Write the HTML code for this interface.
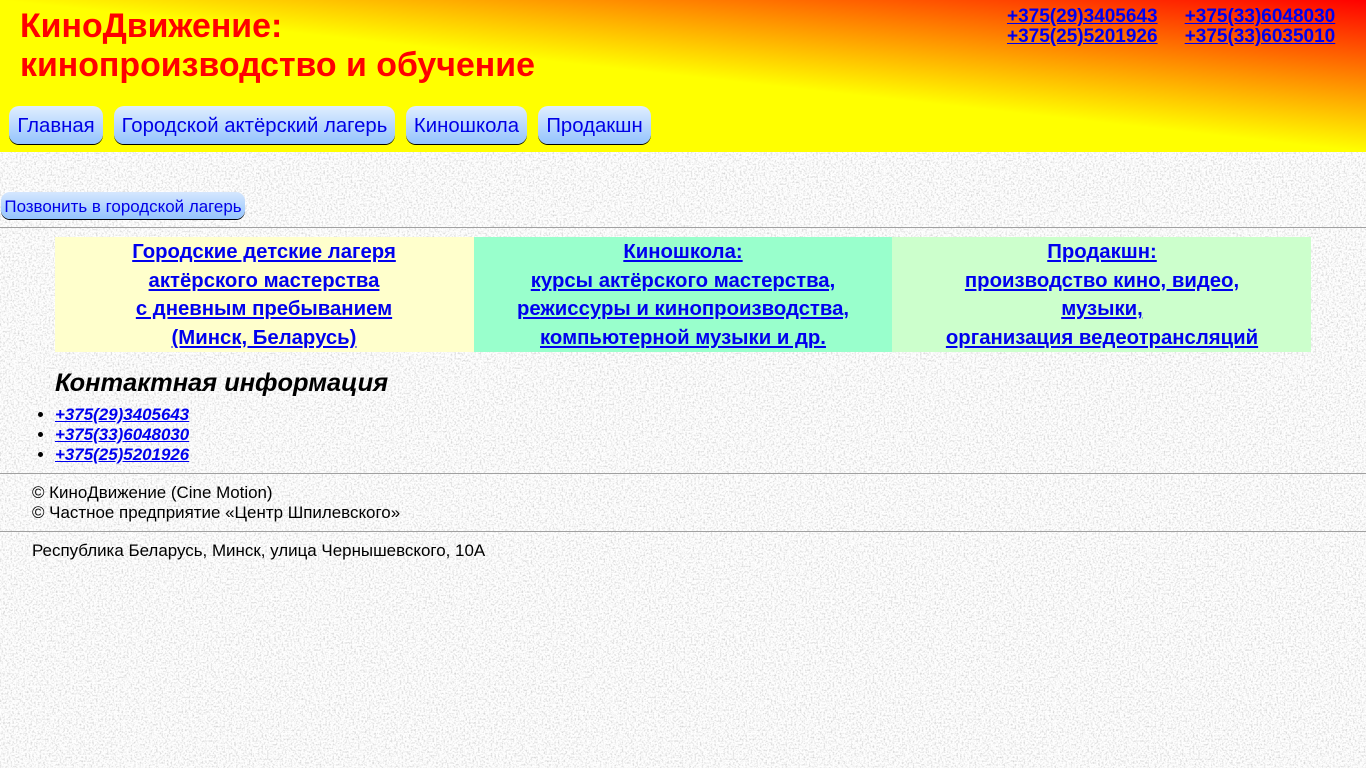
<!DOCTYPE html>
<html lang="ru">
<head>
<meta charset="utf-8">
<title>КиноДвижение</title>
<style>
html,body{margin:0;padding:0}
body{width:1366px;height:768px;overflow:hidden;position:relative;background:#f9f9f9;font-family:"Liberation Sans",sans-serif;color:#000}
#tex{position:absolute;left:0;top:0;width:1366px;height:768px}
a{color:#0000ee;text-decoration:underline}
.abs{position:absolute;white-space:nowrap}
header{position:absolute;left:0;top:0;width:1366px;height:152px;background:linear-gradient(to bottom left,#f00,#ff0 50%)}
h1{margin:0;font-size:33.88px;line-height:39px;color:#f00;font-weight:bold;left:20px;top:7px}
.ph{font-size:19px;font-weight:bold;line-height:20px}
.btn{position:absolute;box-sizing:border-box;height:38px;top:106px;font-size:20.33px;line-height:40px;text-align:center;color:#0000e6;border-radius:10px;background:linear-gradient(#e0eefe,#94c4fd);box-shadow:0 1px 0 #000;white-space:nowrap}
.btn2{position:absolute;box-sizing:border-box;left:1px;top:192px;width:244px;height:27px;font-size:16.94px;line-height:29px;text-align:center;color:#0000e6;border-radius:9px;background:linear-gradient(#d5e7fe,#94c4fd);box-shadow:0 1px 0 #000;white-space:nowrap}
hr{position:absolute;left:0;width:1366px;height:1px;margin:0;border:0;background:#a0a0a0}
.cell{position:absolute;top:237px;height:115px;text-align:center;font-size:20.33px;font-weight:bold;line-height:28.6px;padding-top:1px;box-sizing:border-box}
h2{margin:0;left:55px;top:367px;font-size:25.41px;line-height:32px;font-style:italic;font-weight:bold}
ul{position:absolute;left:0;top:405px;margin:0;padding:0 0 0 55px;font-size:16.94px;line-height:20px;font-style:italic;font-weight:bold}
ul li::marker{font-style:normal}
.t{font-size:16.94px;line-height:20px;left:32px}
</style>
</head>
<body>
<svg id="tex" xmlns="http://www.w3.org/2000/svg" width="1366" height="768">
<filter id="n" x="0" y="0" width="100%" height="100%">
<feTurbulence type="fractalNoise" baseFrequency="0.55" numOctaves="2" seed="4" stitchTiles="stitch"/>
<feColorMatrix type="matrix" values="0 0 0 0 0  0 0 0 0 0  0 0 0 0 0  1.6 0 0 0 -0.72"/>
</filter>
<rect width="1366" height="768" fill="#fefefe"/>
<rect width="1366" height="768" filter="url(#n)" opacity=".27"/>
</svg>

<header>
<h1 class="abs">КиноДвижение:<br>кинопроизводство и обучение</h1>
<div class="abs ph" style="left:1007px;top:7px"><a href="#">+375(29)3405643</a></div>
<div class="abs ph" style="left:1184.7px;top:7px"><a href="#">+375(33)6048030</a></div>
<div class="abs ph" style="left:1007px;top:27px"><a href="#">+375(25)5201926</a></div>
<div class="abs ph" style="left:1184.7px;top:27px"><a href="#">+375(33)6035010</a></div>
<div class="btn" style="left:9px;width:94px">Главная</div>
<div class="btn" style="left:114px;width:281px">Городской актёрский лагерь</div>
<div class="btn" style="left:406px;width:121px">Киношкола</div>
<div class="btn" style="left:538px;width:113px">Продакшн</div>
</header>

<div class="btn2">Позвонить в городской лагерь</div>
<hr style="top:227px">

<div class="cell" style="left:55px;width:419px;padding-right:1px;background:#ffc"><a href="#">Городские детские лагеря<br>актёрского мастерства<br>с дневным пребыванием<br>(Минск, Беларусь)</a></div>
<div class="cell" style="left:474px;width:418px;background:#9fc"><a href="#">Киношкола:<br>курсы актёрского мастерства,<br>режиссуры и кинопроизводства,<br>компьютерной музыки и др.</a></div>
<div class="cell" style="left:892px;width:419px;padding-left:1px;background:#cfc"><a href="#">Продакшн:<br>производство кино, видео,<br>музыки,<br>организация ведеотрансляций</a></div>

<h2 class="abs">Контактная информация</h2>
<ul>
<li><a href="#">+375(29)3405643</a></li>
<li><a href="#">+375(33)6048030</a></li>
<li><a href="#">+375(25)5201926</a></li>
</ul>
<hr style="top:473px">
<div class="abs t" style="top:483px">© КиноДвижение (Cine Motion)<br>© Частное предприятие «Центр Шпилевского»</div>
<hr style="top:531px">
<div class="abs t" style="top:541px">Республика Беларусь, Минск, улица Чернышевского, 10А</div>
</body>
</html>
